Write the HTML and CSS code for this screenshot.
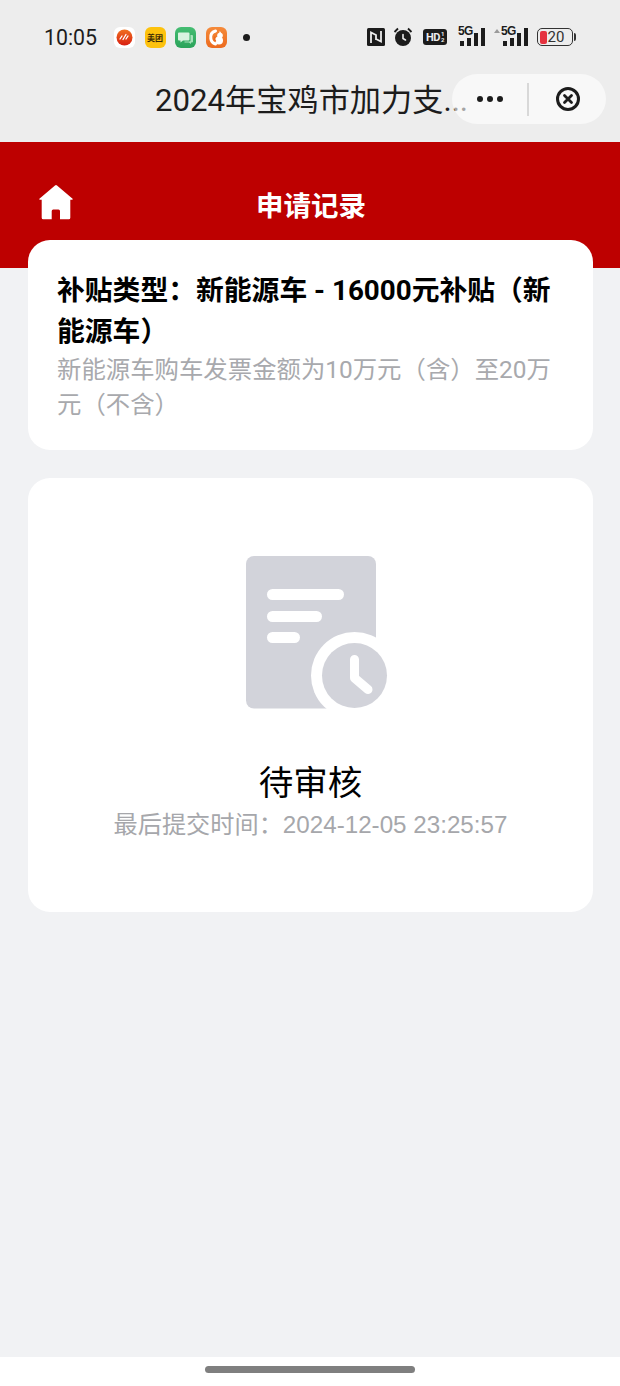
FILE: index.html
```html
<!DOCTYPE html>
<html lang="zh-CN">

<head>
    <meta charset="UTF-8">
    <meta name="viewport" content="width=device-width, initial-scale=1.0">
    <title>申请记录</title>
    <link rel="stylesheet" href="styles.css">
</head>

<body>
    <div class="topbar">
        <div class="status">
            <span class="status__time">10:05</span>
            <div class="status__apps">
                <span class="app app--white">
                    <svg width="21" height="21" viewBox="0 0 21 21"><defs><linearGradient id="ballGrad" x1="0" y1="0" x2="0" y2="1"><stop offset="0" stop-color="#f0701f"/><stop offset="1" stop-color="#d81e12"/></linearGradient></defs><circle cx="10.5" cy="10.5" r="8" fill="url(#ballGrad)"/><path d="M6 12l2-3M9 12.500l3-5M12 12l2-3" stroke="#fff" stroke-width="1.300" stroke-linecap="round"/></svg>
                </span>
                <span class="app app--yellow">美团</span>
                <span class="app app--green">
                    <svg width="21" height="21" viewBox="0 0 21 21"><path d="M4 5.500h9.500a1 1 0 0 1 1 1v6a1 1 0 0 1-1 1H8l-2.500 2v-2H4a1 1 0 0 1-1-1v-6a1 1 0 0 1 1-1z" fill="#d9f3e0"/><path d="M15.500 8H17a1 1 0 0 1 1 1v5.500a1 1 0 0 1-1 1h-1v1.500l-2-1.500H9.500v-1h5a1 1 0 0 0 1-1z" fill="#a7e2bb"/></svg>
                </span>
                <span class="app app--orange">
                    <svg width="21" height="21" viewBox="0 0 21 21"><path d="M9.500 4C6 5 4.300 8 4.800 11.500c.3 2.500 2 4.700 4.700 5.500" fill="none" stroke="#fff" stroke-width="3" stroke-linecap="round"/><circle cx="13" cy="13.500" r="4" fill="#fff"/><circle cx="14" cy="8.500" r="2.800" fill="#fff"/><path d="M13 6.500l.8-2.500 1.700 2.500z" fill="#fff"/><path d="M9 9.500c-.8 1.800-.5 3.500.8 5" fill="none" stroke="#ec6a1e" stroke-width="1.200"/></svg>
                </span>
                <span class="status__dot"></span>
            </div>
            <div class="status__right">
                <svg class="ico-nfc" width="18" height="18" viewBox="0 0 18 18"><rect width="18" height="18" rx="1.500" fill="#1c1c1c"/><path d="M4 15V4.500l5 2.500v5M14 3v10.500L9 11V7" fill="none" stroke="#ededed" stroke-width="1.800"/></svg>
                <svg class="ico-alarm" width="20" height="20" viewBox="0 0 20 20"><circle cx="10" cy="11" r="8" fill="#1c1c1c"/><path d="M1.500 5l3.500-3.500M18.500 5L15 1.500" stroke="#1c1c1c" stroke-width="1.800" fill="none"/><path d="M10 7.500v4l2.500 1.500" stroke="#ededed" stroke-width="1.600" fill="none" stroke-linecap="round"/></svg>
                <span class="hd">HD<span class="hd__sub">1<br>2</span></span>
                <div class="signal">
                    <span class="signal__label">5G</span>
                    <span class="bars"><i class="bar bar--1"></i><i class="bar bar--2"></i><i class="bar bar--3"></i><i class="bar bar--4"></i></span>
                </div>
                <div class="signal signal--second">
                    <span class="signal__up"></span>
                    <span class="signal__label">5G</span>
                    <span class="bars"><i class="bar bar--1"></i><i class="bar bar--2"></i><i class="bar bar--3"></i><i class="bar bar--4"></i></span>
                </div>
                <div class="battery">
                    <span class="battery__level"></span>
                    <span class="battery__text">20</span>
                </div>
                <span class="battery__cap"></span>
            </div>
        </div>
        <div class="titlebar">
            <span class="titlebar__text">2024年宝鸡市加力支...</span>
            <div class="capsule">
                <span class="capsule__more"><i></i><i></i><i></i></span>
                <span class="capsule__line"></span>
                <svg width="26" height="26" viewBox="0 0 26 26"><circle cx="13" cy="13" r="10.500" fill="none" stroke="#1c1c1c" stroke-width="3"/><path d="M9.500 9.500l7 7M16.500 9.500l-7 7" stroke="#1c1c1c" stroke-width="2.800" stroke-linecap="round"/></svg>
            </div>
        </div>
    </div>

    <div class="redhead">
        <svg class="redhead__home" width="36" height="36" viewBox="0 0 36 36"><path d="M17 1.400a1.500 1.500 0 0 1 2 0L34.300 14.500a.7.700 0 0 1-.5 1.300H32.300V33.800a1.500 1.500 0 0 1-1.500 1.500H22V27a1.500 1.500 0 0 0-1.500-1.500h-5.300a1.500 1.500 0 0 0-1.500 1.500v8.300H5.200a1.500 1.500 0 0 1-1.500-1.500V15.800H2.200a.7.700 0 0 1-.5-1.300z" fill="#fff"/></svg>
        <h1 class="redhead__title">申请记录</h1>
        <span></span>
    </div>

    <main class="content">
        <section class="card card--info">
            <h2 class="card__type">补贴类型：新能源车 - 16000元补贴（新能源车）</h2>
            <p class="card__desc">新能源车购车发票金额为10万元（含）至20万元（不含）</p>
        </section>
        <section class="card card--state">
            <svg class="state__icon" width="142" height="156" viewBox="0 0 142 156">
                <rect x="0" y="0" width="130" height="152.500" rx="8" fill="#d2d3da"/>
                <rect x="21" y="33" width="77" height="11" rx="5.500" fill="#fff"/>
                <rect x="21" y="55" width="55" height="11" rx="5.500" fill="#fff"/>
                <rect x="21" y="76" width="33" height="11" rx="5.500" fill="#fff"/>
                <circle cx="108.500" cy="119.500" r="43.500" fill="#fff"/>
                <circle cx="108.500" cy="119.500" r="32.500" fill="#d2d3da"/>
                <path d="M108.500 103.500V122L122 133.500" fill="none" stroke="#fff" stroke-width="9" stroke-linecap="round" stroke-linejoin="round"/>
            </svg>
            <h3 class="state__title">待审核</h3>
            <p class="state__time">最后提交时间：2024-12-05 23:25:57</p>
        </section>
    </main>

    <div class="homebar"><span class="homebar__pill"></span></div>
</body>

</html>
```

FILE: styles.css
```css
* {
  margin: 0;
  padding: 0;
  box-sizing: border-box;
}

body {
  width: 620px;
  height: 1386px;
  display: flex;
  flex-direction: column;
  overflow: hidden;
  font-family: Roboto, 'Noto Sans CJK SC', sans-serif;
  background-color: #f1f2f4;
  color: #000;
}

.topbar {
  height: 142px;
  background-color: #ededed;
  color: #1c1c1c;
}

.status {
  height: 74px;
  display: flex;
  align-items: center;
  padding: 0 44px 0 44px;
}

.status__time {
  font-size: 21.300px;
  width: 70px;
}

.status__apps {
  display: flex;
  align-items: center;
  gap: 9.500px;
}

.app {
  width: 21px;
  height: 21px;
  border-radius: 6px;
  display: flex;
  align-items: center;
  justify-content: center;
  overflow: hidden;
}

.app--white {
  background-color: #fff;
}

.app--yellow {
  background-color: #fdc20d;
  font-size: 8px;
  font-weight: 700;
  color: #3a2a05;
  white-space: nowrap;
}

.app--green {
  background: linear-gradient(#45bd72, #2aa35a);
}

.app--orange {
  background: linear-gradient(#f58b3b, #ec6a1e);
}

.status__dot {
  width: 7px;
  height: 7px;
  margin-left: 7px;
  border-radius: 50%;
  background-color: #1c1c1c;
}

.status__right {
  margin-left: auto;
  display: flex;
  align-items: center;
  gap: 8px;
}

.hd {
  width: 24px;
  height: 16px;
  margin-left: 2px;
  border-radius: 3px;
  background-color: #1c1c1c;
  color: #ededed;
  font-size: 11px;
  font-weight: 700;
  display: flex;
  align-items: center;
  justify-content: center;
  line-height: 1;
  letter-spacing: -0.5px;
}

.hd__sub {
  font-size: 6px;
  line-height: 6px;
  margin-left: 1px;
}

.signal {
  position: relative;
  width: 27px;
  height: 24px;
  margin-left: 3px;
}

.signal--second {
  width: 35px;
  margin-left: 0;
}

.signal__label {
  position: absolute;
  left: 0;
  top: 0;
  font-size: 12px;
  font-weight: 700;
  line-height: 12px;
  letter-spacing: -0.7px;
  font-family: 'Liberation Sans', sans-serif;
}

.signal--second .signal__label {
  left: 8px;
}

.signal__up {
  position: absolute;
  left: 1px;
  top: 4px;
  border-left: 3px solid transparent;
  border-right: 3px solid transparent;
  border-bottom: 4px solid #9a9a9a;
}

.bars {
  position: absolute;
  right: 0;
  bottom: 3px;
  display: flex;
  align-items: flex-end;
  gap: 3px;
}

.bar {
  width: 4px;
  background-color: #1c1c1c;
  display: block;
}

.bar--1 { height: 5px; }
.bar--2 { height: 8px; }
.bar--3 { height: 13px; }
.bar--4 { height: 18px; }

.battery {
  width: 36px;
  height: 18px;
  margin-left: 1px;
  border: 1.500px solid #333;
  border-radius: 5px;
  display: flex;
  align-items: center;
  padding: 1.500px;
  gap: 1px;
}

.battery__level {
  width: 7px;
  height: 100%;
  border-radius: 2px;
  background-color: #e5323f;
}

.battery__text {
  font-size: 15px;
  line-height: 1;
  color: #333;
}

.battery__cap {
  width: 2px;
  height: 8px;
  margin-left: -7px;
  border-radius: 0 2px 2px 0;
  background-color: #333;
}

.titlebar {
  position: relative;
  height: 68px;
}

.titlebar__text {
  position: absolute;
  left: 155px;
  top: 5px;
  font-size: 31.200px;
  line-height: 44px;
  white-space: nowrap;
}

.capsule {
  position: absolute;
  left: 452px;
  top: 0;
  width: 154px;
  height: 50px;
  border-radius: 25px;
  background-color: rgba(255, 255, 255, 0.6);
  display: flex;
  align-items: center;
  padding-left: 25px;
}

.capsule__more {
  display: flex;
  gap: 4px;
  width: 26px;
}

.capsule__more i {
  width: 6px;
  height: 6px;
  border-radius: 50%;
  background-color: #1c1c1c;
}

.capsule__line {
  width: 2px;
  height: 33px;
  margin-left: 24px;
  margin-right: 26px;
  background-color: #d8d8d8;
}

.redhead {
  height: 126px;
  padding: 42px 38px 0;
  background-color: #bd0000;
  display: grid;
  grid-template-columns: 1fr auto 1fr;
  align-items: start;
}

.redhead__title {
  margin-top: 3px;
  padding-left: 2px;
  color: #fff;
  font-size: 27.500px;
  line-height: 40px;
  font-weight: 700;
}

.content {
  flex: 1;
  margin-top: -28px;
  padding: 0 27px 0 28px;
  display: flex;
  flex-direction: column;
  gap: 28px;
}

.card {
  background-color: #fff;
  border-radius: 22px;
}

.card--info {
  height: 210px;
  padding: 30px 29px 0;
}

.card__type {
  font-size: 27.800px;
  line-height: 41px;
  font-weight: 700;
}

.card__desc {
  font-size: 24.400px;
  line-height: 35px;
  color: #a8a9ad;
}

.card--state {
  height: 434px;
  padding-top: 78px;
  display: flex;
  flex-direction: column;
  align-items: center;
}

.state__icon {
  margin-left: 12px;
}

.state__title {
  margin-top: 47px;
  font-size: 34.500px;
  line-height: 48px;
  font-weight: 400;
}

.state__time {
  font-size: 24.200px;
  line-height: 36px;
  color: #a6a7ab;
  font-family: 'Liberation Sans', 'Noto Sans CJK SC', sans-serif;
}

.homebar {
  height: 29px;
  background-color: #fff;
  display: flex;
  justify-content: center;
  padding-top: 9px;
}

.homebar__pill {
  width: 210px;
  height: 7px;
  border-radius: 4px;
  background-color: #7f7f7f;
}
```
